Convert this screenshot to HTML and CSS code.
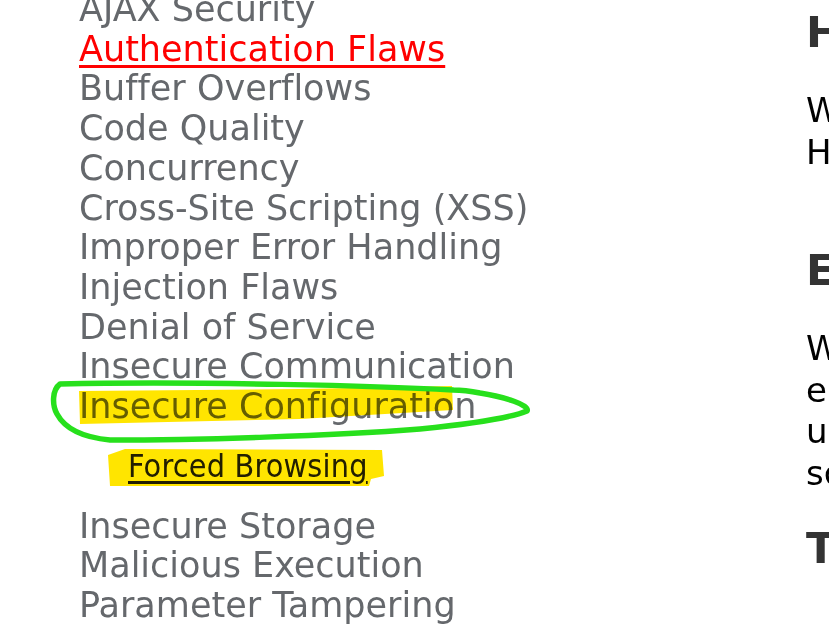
FILE: index.html
```html
<!DOCTYPE html>
<html>
<head>
<meta charset="utf-8">
<link rel="stylesheet" href="styles.css">
</head>
<body>
<div class="page">
  <nav class="menu">
    <ul class="cats">
      <li>AJAX Security</li>
      <li class="active"><a>Authentication Flaws</a></li>
      <li>Buffer Overflows</li>
      <li>Code Quality</li>
      <li>Concurrency</li>
      <li>Cross-Site Scripting (XSS)</li>
      <li>Improper Error Handling</li>
      <li>Injection Flaws</li>
      <li>Denial of Service</li>
      <li>Insecure Communication</li>
      <li>Insecure Configuration
        <ul class="sub"><li><a>Forced Browsing</a></li></ul>
      </li>
      <li>Insecure Storage</li>
      <li>Malicious Execution</li>
      <li>Parameter Tampering</li>
    </ul>
  </nav>
  <main class="content">
    <h2 class="h">How to Exploit Forced Browsing</h2>
    <p class="para first">We have hidden some pages in this site.<br>Hackers can find them by guessing URLs.</p>
    <h2 class="h second">Explanation</h2>
    <p class="para">With forced browsing, an attacker<br>enumerates resources that are not<br>usually referenced by the application but<br>sometimes are still accessible.</p>
    <h2 class="h third">Tips</h2>
  </main>
</div>
<svg class="marks" width="829" height="633" viewBox="0 0 829 633">
  <g class="hl">
    <polygon points="79,391 300,389 452,386 453,410 300,419 80,424"/>
    <polygon points="108,455 125,449 382,450 384,476 371,479 369,486 110,486"/>
  </g>
  <path class="loop" d="M 453 390 C 380 386, 200 381, 60 384 C 52 390, 52 405, 57 414 C 64 427, 78 437, 110 440 C 200 440, 330 436, 420 429 C 470 424, 510 418, 527 411 C 530 405, 505 397, 480 393 C 470 391, 462 390, 453 390"/>
</svg>
</body>
</html>
```
FILE: styles.css
```css
html, body {
  margin: 0;
  padding: 0;
  background: #ffffff;
  overflow: hidden;
}
body {
  width: 829px;
  height: 633px;
  position: relative;
}
.page {
  display: flex;
  align-items: flex-start;
}
.menu {
  width: 727px;
  padding-left: 79px;
  flex: none;
}
.cats {
  list-style: none;
  margin: -10px 0 0 0;
  padding: 0;
  font-family: "DejaVu Sans", Verdana, sans-serif;
  font-size: 35px;
  line-height: 39.7px;
  color: #65686c;
  font-variant-ligatures: none;
}
.cats > li.active a {
  color: #ff0000;
  text-decoration: underline;
  text-decoration-thickness: 3px;
  text-underline-offset: 4px;
}
.sub {
  list-style: none;
  margin: 0;
  padding: 19px 0 21px 49px;
  font-family: "DejaVu Sans Condensed", "DejaVu Sans", sans-serif;
  font-stretch: condensed;
  font-size: 32px;
  line-height: 40px;
  letter-spacing: 0.2px;
}
.sub a {
  color: #222200;
  text-decoration: underline;
  text-decoration-thickness: 3px;
  text-underline-offset: 4px;
}
.content {
  flex: none;
  white-space: nowrap;
  font-family: "DejaVu Sans", Verdana, sans-serif;
}
.h {
  margin: 10px 0 0 0;
  font-size: 43px;
  line-height: 44px;
  font-weight: bold;
  color: #333333;
}
.para {
  margin: 36px 0 0 0;
  font-size: 34px;
  line-height: 41.5px;
  color: #000000;
}
.h.second {
  margin-top: 75px;
}
.h.third {
  margin-top: 32px;
}
.marks {
  position: absolute;
  left: 0;
  top: 0;
  pointer-events: none;
}
.hl {
  fill: #ffe500;
  mix-blend-mode: multiply;
}
.loop {
  fill: none;
  stroke: #27e01c;
  stroke-width: 5.5;
  stroke-linecap: round;
  stroke-linejoin: round;
}
```
